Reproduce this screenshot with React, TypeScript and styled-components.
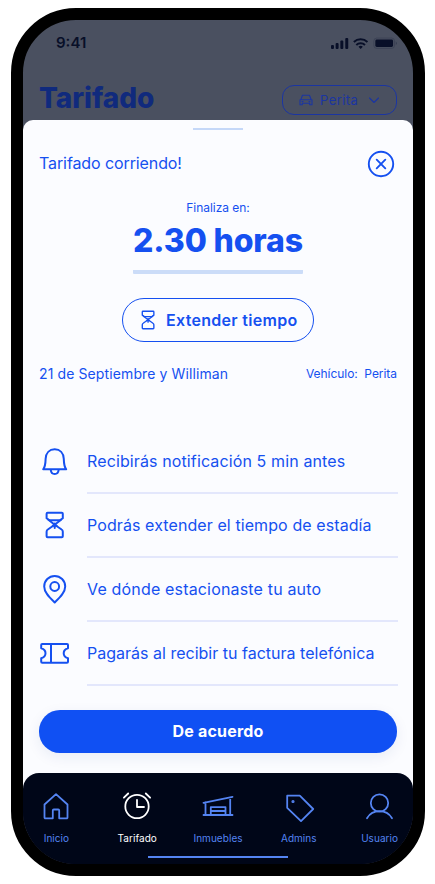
import React from "react";
import styled, { createGlobalStyle } from "styled-components";

const BLUE = "#1550f0";
const NAV_BLUE = "#5484f2";
const DIM_BLUE = "#1b35a2";

const GlobalStyle = createGlobalStyle`
  * { box-sizing: border-box; }
  body { margin: 0; background: #fff; }
`;

const Page = styled.div`
  width: 435px;
  height: 884px;
  padding: 8px 0 0 11px;
  overflow: hidden;
  font-family: Inter, "Liberation Sans", sans-serif;
`;

const Phone = styled.div`
  width: 414px;
  height: 868px;
  border: 12px solid #000;
  border-radius: 65px;
  background: #4a5060;
  overflow: hidden;
  display: flex;
  flex-direction: column;
`;

const Label = styled.span<{
  $size: number;
  $spacing?: number;
  $weight?: number;
  $color?: string;
}>`
  margin: 0;
  font-size: ${(p) => p.$size}px;
  letter-spacing: ${(p) => p.$spacing ?? 0}px;
  font-weight: ${(p) => p.$weight ?? 400};
  color: ${(p) => p.$color ?? BLUE};
  line-height: 20px;
  white-space: pre;
`;

const Header = styled.header`
  height: 100px;
  flex: none;
  padding: 13px 16px 0 16px;
`;

const StatusBar = styled.div`
  height: 20px;
  display: flex;
  align-items: center;
  justify-content: space-between;
  padding-left: 17px;
`;

const TitleRow = styled.div`
  margin-top: 32px;
  height: 30px;
  display: flex;
  align-items: center;
  justify-content: space-between;
  & > h1 { padding-bottom: 5px; }
`;

const VehiclePill = styled.button`
  width: 115px;
  height: 30px;
  padding: 0 16px;
  border: 1px solid ${DIM_BLUE};
  border-radius: 12px;
  background: none;
  font-family: inherit;
  display: flex;
  align-items: center;
  gap: 7px;
  & > svg:last-child { margin-left: auto; }
`;

const Sheet = styled.main`
  flex: 1;
  display: flex;
  flex-direction: column;
  border-radius: 10px 10px 0 0;
  background: linear-gradient(#fbfcff calc(100% - 60px), #000618 calc(100% - 60px));
`;

const Handle = styled.div`
  width: 50px;
  height: 2px;
  margin: 8px auto 0;
  background: #c5d8f8;
`;

const SheetHead = styled.div`
  height: 28px;
  margin: 20px 18px 0 16px;
  display: flex;
  align-items: center;
  justify-content: space-between;
  & > span { padding-bottom: 2px; }
`;

const Countdown = styled.section`
  margin-top: 20px;
  display: flex;
  flex-direction: column;
  align-items: center;
`;

const Remaining = styled.div`
  width: 170px;
  height: 56px;
  padding-top: 13px;
  display: flex;
  justify-content: center;
  border-bottom: 4px solid #cbdcf8;
  border-radius: 1px;
`;

const ExtendButton = styled.button`
  width: 192px;
  height: 44px;
  margin-top: 24px;
  padding: 0 0 0 16px;
  border: 1px solid ${BLUE};
  border-radius: 22px;
  background: none;
  font-family: inherit;
  display: flex;
  align-items: center;
  gap: 9px;
`;

const Place = styled.div`
  margin: 22px 16px 0;
  height: 20px;
  display: flex;
  align-items: center;
  justify-content: space-between;
`;

const List = styled.ul`
  list-style: none;
  margin: 46px 15px 0 16px;
  padding: 0;
`;

const Item = styled.li`
  height: 64px;
  display: grid;
  grid-template-columns: 32px 1fr;
  column-gap: 16px;
`;

const ItemIcon = styled.div`
  display: grid;
  place-items: center;
  padding-bottom: 3px;
`;

const ItemText = styled.div`
  display: flex;
  align-items: center;
  border-bottom: 2px solid #e3e7fc;
`;

const Accept = styled.button`
  height: 43px;
  margin: 24px 16px 0;
  flex: none;
  border: 0;
  border-radius: 21px;
  background: #1050f3;
  box-shadow: 0 4px 14px rgba(30, 50, 130, 0.08);
  font-family: inherit;
  padding: 0 0 2px;
`;

const Nav = styled.nav`
  height: 91px;
  margin-top: auto;
  flex: none;
  border-radius: 16px 16px 0 0;
  background: #000618;
`;

const Tabs = styled.div`
  height: 83px;
  padding: 17px 0 0;
  margin: 0 -7px;
  display: grid;
  grid-template-columns: repeat(5, 1fr);
`;

const Tab = styled.a`
  display: flex;
  flex-direction: column;
  align-items: center;
  gap: 6px;
`;

const HomeBar = styled.div`
  width: 140px;
  height: 2px;
  margin: 0 auto;
  background: ${NAV_BLUE};
`;

type IconProps = {
  w: number;
  h: number;
  color?: string;
  stroke?: number;
  box?: string;
  children: React.ReactNode;
};

const Icon = ({ w, h, color = BLUE, stroke = 1.8, box, children }: IconProps) => (
  <svg
    width={w}
    height={h}
    viewBox={box ?? `0 0 ${w} ${h}`}
    fill="none"
    stroke={color}
    strokeWidth={stroke}
    strokeLinejoin="round"
    strokeLinecap="round"
  >
    {children}
  </svg>
);

const hourglass = (
  <>
    <path d="M8.600 3.800h14.200a1 1 0 0 1 1 1v4.400L21 11.300H10.400L7.600 9.200V4.800a1 1 0 0 1 1-1Z" />
    <path d="M9.400 10.800 15.700 15.700 22 10.800M15.700 14.500v4.500M13.800 16.800h3.800" />
    <path d="m15.700 15.700-6.900 4.800a2.600 2.600 0 0 0-1.200 2.200v4.500a1 1 0 0 0 1 1h14.200a1 1 0 0 0 1-1v-4.500a2.600 2.600 0 0 0-1.200-2.200Z" />
  </>
);

const StatusIcons = () => (
  <svg width="66" height="14" viewBox="0 0 67 14" fill="#080f28">
    <rect x="0" y="9" width="3" height="4" rx="1" />
    <rect x="4.700" y="7" width="3" height="6" rx="1" />
    <rect x="9.500" y="4.500" width="3" height="8.500" rx="1" />
    <rect x="14.500" y="2" width="3" height="11" rx="1" />
    <g fill="none" stroke="#080f28" strokeWidth="2">
      <path d="M23.200 6a10 10 0 0 1 13.800 0" />
      <path d="M25.700 9a6.300 6.300 0 0 1 8.800 0" />
    </g>
    <path d="M27.900 10.800a3.300 3.300 0 0 1 4.400 0L30.100 13Z" />
    <rect x="43.500" y="2" width="21" height="10.500" rx="3" fill="none" stroke="#353c50" strokeWidth=".6" />
    <rect x="45" y="3.500" width="18" height="7.500" rx="1.500" />
    <path d="M65.800 5.500v3.500q1-.6 1-1.800t-1-1.700Z" fill="#353c50" />
  </svg>
);

const items = [
  {
    text: "Recibirás notificación 5 min antes",
    spacing: 0.12,
    art: (
      <>
        <path d="M4.200 24.300c2.300-3 2.300-6 2.400-10.300C6.800 8 10.500 4.300 15.700 4.300S24.600 8 24.800 14c.1 4.300.1 7.300 2.400 10.300Z" />
        <path d="M11.800 25c.2 2.600 1.700 4 3.900 4s3.700-1.400 3.900-4" />
      </>
    ),
  },
  { text: "Podrás extender el tiempo de estadía", spacing: 0.09, art: hourglass },
  {
    text: "Ve dónde estacionaste tu auto",
    spacing: 0.17,
    art: (
      <>
        <path d="M15.700 29.500C11 25 5.200 19.800 5.200 13.400a10.500 10.500 0 0 1 21 0c0 6.400-5.800 11.600-10.500 16.100Z" />
        <circle cx="15.700" cy="13.500" r="4.400" />
      </>
    ),
  },
  {
    text: "Pagarás al recibir tu factura telefónica",
    spacing: 0.01,
    art: (
      <path d="M3.200 7H28a1 1 0 0 1 1 1v3.200c-3 .8-4.300 2.500-4.300 5s1.300 4.200 4.300 5V24.700a1 1 0 0 1-1 1H3.200a1 1 0 0 1-1-1v-3.500c3-.8 4.300-2.500 4.300-5s-1.300-4.200-4.300-5V8a1 1 0 0 1 1-1ZM12 7v18.700" />
    ),
  },
];

const tabs = [
  {
    name: "Inicio",
    art: <path d="M4.500 14.500 16 4.200l11.500 10.300V27.500a.8.8 0 0 1-.8.800H19.200V20.500a1 1 0 0 0-1-1h-4.400a1 1 0 0 0-1 1v7.800H5.300a.8.8 0 0 1-.8-.8Z" />,
  },
  {
    name: "Tarifado",
    active: true,
    art: (
      <>
        <circle cx="16" cy="16.500" r="11.700" />
        <path d="M16 9.800V17h7M2.900 7.700 7.200 3.500M24.800 3.500 29.100 7.700" />
      </>
    ),
  },
  {
    name: "Inmuebles",
    art: <path d="M1.500 12.800 30.500 6.800M3.500 12.500V25M28.200 7.500V25M1.500 25H30.500M8.800 25V17.200H23.500V25M8.800 21H23.500" />,
  },
  {
    name: "Admins",
    art: (
      <>
        <path d="M4.200 5.700H16.800L30.200 19 18 31.200 4.200 17.800Z" />
        <circle cx="10" cy="11.500" r=".7" />
      </>
    ),
  },
  {
    name: "Usuario",
    art: (
      <>
        <circle cx="15.500" cy="13" r="8.700" />
        <path d="M3 28.200c3-5 7-7 12.500-7s9.500 2 12.500 7" />
      </>
    ),
  },
];

export default function App() {
  return (
    <Page>
      <GlobalStyle />
      <Phone>
        <Header>
          <StatusBar>
            <Label $size={15} $weight={600} $color="#080f28">9:41</Label>
            <StatusIcons />
          </StatusBar>
          <TitleRow>
            <Label as="h1" $size={28} $weight={800} $color="#102a7d" $spacing={-0.05}>Tarifado</Label>
            <VehiclePill>
              <Icon w={14} h={14} color={DIM_BLUE} stroke={1.1}>
                <path d="M1 6.800h12v5h-2.300V10.300H3.300v1.500H1ZM1.800 6.800 3.500 2.300h7l1.700 4.500M3 8.600h1M10 8.600h1" />
              </Icon>
              <Label $size={13} $color={DIM_BLUE} $spacing={0.45}>Perita</Label>
              <Icon w={12} h={12} color={DIM_BLUE} stroke={1.1}>
                <path d="m1.500 4 4.500 4.500L10.500 4" />
              </Icon>
            </VehiclePill>
          </TitleRow>
        </Header>
        <Sheet>
          <Handle />
          <SheetHead>
            <Label $size={16} $spacing={-0.1}>Tarifado corriendo!</Label>
            <Icon w={28} h={28} stroke={1.900}>
              <circle cx="14" cy="14" r="12.200" />
              <path d="m9.700 9.700 8.600 8.600M18.300 9.700l-8.600 8.600" />
            </Icon>
          </SheetHead>
          <Countdown>
            <Label $size={12} $spacing={-0.05}>Finaliza en:</Label>
            <Remaining>
              <Label $size={32} $weight={800} $spacing={-0.15}>2.30 horas</Label>
            </Remaining>
            <ExtendButton>
              <Icon w={18} h={20} box="3 2 25.200 28" stroke={1.900}>{hourglass}</Icon>
              <Label $size={16} $weight={600} $spacing={0.3}>Extender tiempo</Label>
            </ExtendButton>
          </Countdown>
          <Place>
            <Label $size={14} $spacing={0.11}>21 de Septiembre y Williman</Label>
            <Label $size={12} $spacing={-0.05}>{"Vehículo:  Perita"}</Label>
          </Place>
          <List>
            {items.map((item) => (
              <Item key={item.text}>
                <ItemIcon>
                  <Icon w={32} h={32} stroke={2}>{item.art}</Icon>
                </ItemIcon>
                <ItemText>
                  <Label $size={16} $spacing={item.spacing}>{item.text}</Label>
                </ItemText>
              </Item>
            ))}
          </List>
          <Accept>
            <Label $size={16} $weight={700} $color="#fff" $spacing={0.2}>De acuerdo</Label>
          </Accept>
          <Nav>
            <Tabs>
              {tabs.map((tab) => (
                <Tab key={tab.name}>
                  <Icon w={32} h={32} color={tab.active ? "#fff" : NAV_BLUE}>{tab.art}</Icon>
                  <Label $size={10} $spacing={0.05} $color={tab.active ? "#fff" : NAV_BLUE}>
                    {tab.name}
                  </Label>
                </Tab>
              ))}
            </Tabs>
            <HomeBar />
          </Nav>
        </Sheet>
      </Phone>
    </Page>
  );
}
